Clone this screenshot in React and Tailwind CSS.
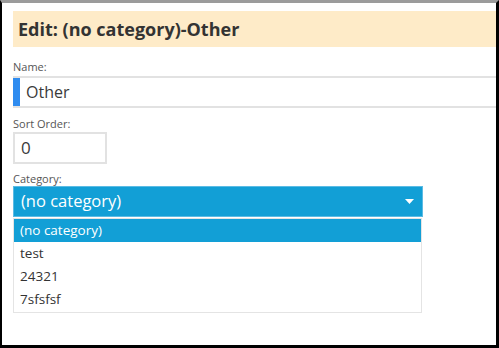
const options = ["(no category)", "test", "24321", "7sfsfsf"];

const App = () => {
    return (
        <div className="w-[499px] h-[348px] bg-white border-l-2 border-r-[3px] border-b-[3px] border-l-black border-r-black border-b-black border-t-[3px] border-t-[#9b9b9b] overflow-hidden font-['Open_Sans',sans-serif] text-[#333]">
            <div className="pt-[8px] pl-[11px]">
                {/* Header */}
                <div className="h-[36px] bg-[#feebc8] flex items-center pl-[5px]">
                    <h1 className="text-[18px] font-bold text-[#333]">Edit: (no category)-Other</h1>
                </div>

                {/* Name */}
                <label className="block mt-[13px] text-[11px] leading-[14px] text-[#555]">Name:</label>
                <div className="mt-[2px] h-[32px] flex border-t-2 border-b-2 border-[#e2e2e2]">
                    <div className="w-[7px] bg-[#2f8cf0]" />
                    <div className="pl-[6px] text-[16px] leading-[28px] text-[#3a3a3a]">Other</div>
                </div>

                {/* Sort Order */}
                <label className="block mt-[9px] text-[11px] leading-[14px] text-[#555]">Sort Order:</label>
                <div className="mt-[1px] w-[94px] h-[32px] border-2 border-[#e2e2e2] pl-[6px] text-[17px] leading-[28px] text-[#3a3a3a]">0</div>

                {/* Category */}
                <label className="block mt-[8px] text-[11px] leading-[14px] text-[#555]">Category:</label>
                <div className="w-[410px]">
                    <div className="h-[31px] bg-[#129fd6] border border-[#5bbbe4] flex items-center justify-between pl-[7px] pr-[8px] text-white text-[16.5px]">
                        <span>(no category)</span>
                        <svg width="9" height="5" viewBox="0 0 9 5"><path d="M0 0h9L4.5 5z" fill="white" /></svg>
                    </div>
                    <ul className="mt-[1px] w-[409px] border border-[#e4e4e4] pb-[1px]">
                        {options.map((o, i) => (
                            <li
                                key={o}
                                className={`h-[23px] pl-[6px] text-[13.5px] leading-[23px] ${i === 0 ? "bg-[#129fd6] text-white" : "text-[#333]"}`}
                            >
                                {o}
                            </li>
                        ))}
                    </ul>
                </div>
            </div>
        </div>
    );
};

export default App;
